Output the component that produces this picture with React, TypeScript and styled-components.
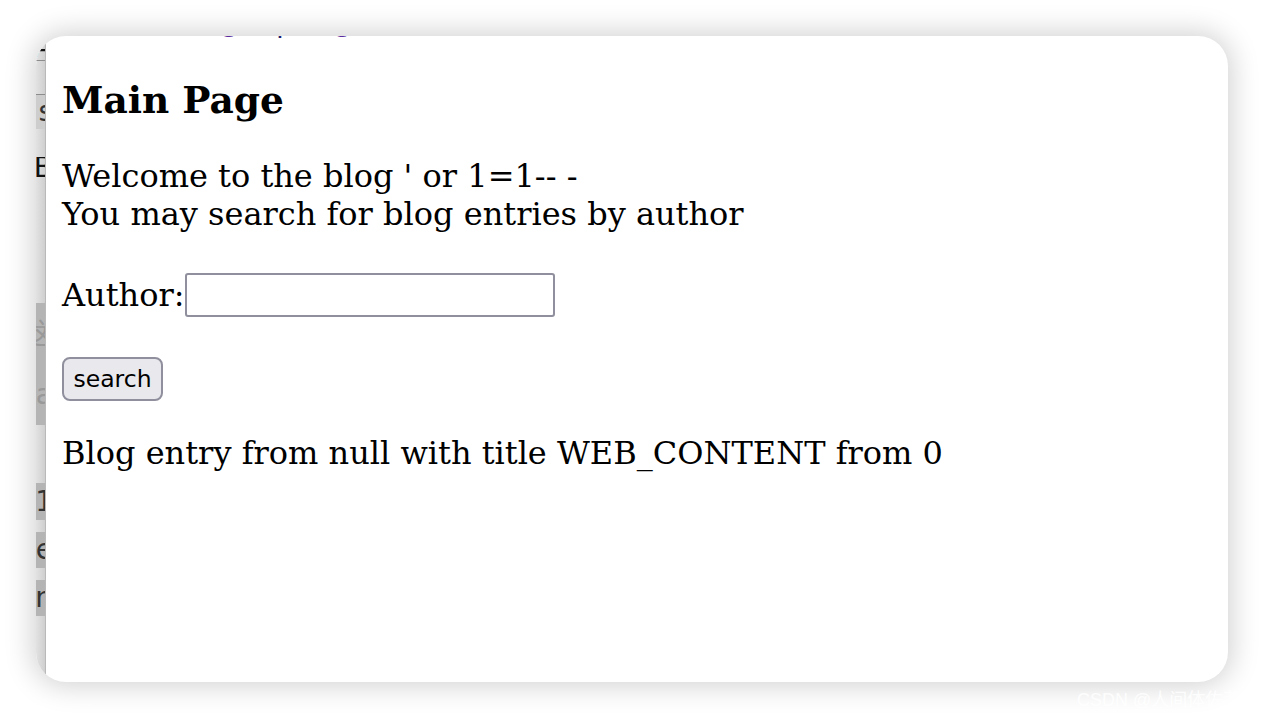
import styled, { createGlobalStyle } from "styled-components"

const GlobalStyle = createGlobalStyle`
    html, body {
        margin: 0;
        padding: 0;
        background: #ffffff;
    }
`

interface StripBlock {
    height: number
    tone: "light" | "mid" | "dark"
    text?: string
    color?: string
    line?: boolean
}

// sliver of the page behind the popup, on the left edge
const stripBlocks: StripBlock[] = [
    { height: 24, tone: "light", text: "A", color: "#111" },
    { height: 33, tone: "light", line: true },
    { height: 34, tone: "mid", text: "s", color: "#333", line: true },
    { height: 28, tone: "light" },
    { height: 22, tone: "light", text: "B", color: "#111" },
    { height: 124, tone: "light" },
    { height: 62, tone: "dark", text: "这", color: "#999" },
    { height: 60, tone: "dark", text: "a", color: "#999" },
    { height: 58, tone: "light" },
    { height: 37, tone: "dark", text: "1", color: "#333" },
    { height: 12, tone: "light" },
    { height: 36, tone: "dark", text: "e", color: "#333" },
    { height: 12, tone: "light" },
    { height: 36, tone: "dark", text: "n", color: "#333" },
]

export default function App() {
    return (
        <>
            <GlobalStyle />
            <Page>
                <Card>
                    <SideStrip>
                        {stripBlocks.map((block, i) => (
                            <StripCell key={i} $height={block.height} $tone={block.tone} $line={block.line}>
                                {block.text && <StripText style={{ color: block.color }}>{block.text}</StripText>}
                            </StripCell>
                        ))}
                    </SideStrip>
                    <Content>
                        <LinkRow>
                            <LinkWord $left={158}>g</LinkWord>
                            <PipeWord $left={34}>|</PipeWord>
                            <LinkWord $left={48}>g</LinkWord>
                        </LinkRow>
                        <Title>Main Page</Title>
                        <Intro>
                            Welcome to the blog ' or 1=1-- -
                            <br />
                            You may search for blog entries by author
                        </Intro>
                        <AuthorForm onSubmit={(e) => e.preventDefault()}>
                            <AuthorRow>
                                <label htmlFor="author">Author:</label>
                                <AuthorInput id="author" type="text" />
                            </AuthorRow>
                            <SearchButton type="submit">search</SearchButton>
                        </AuthorForm>
                        <Result>Blog entry from null with title WEB_CONTENT from 0</Result>
                    </Content>
                </Card>
                <Watermark>CSDN @人间体佐菲</Watermark>
            </Page>
        </>
    )
}

const Page = styled.div`
    position: relative;
    width: 1264px;
    height: 718px;
    box-sizing: border-box;
    padding: 36px;
    background: #ffffff;
`

const Card = styled.div`
    width: 1192px;
    height: 646px;
    display: flex;
    border-radius: 30px;
    overflow: hidden;
    background: #ffffff;
    box-shadow: 0 0 28px 4px rgba(0, 0, 0, 0.18);
`

const SideStrip = styled.div`
    width: 9px;
    flex-shrink: 0;
    display: flex;
    flex-direction: column;
    background: linear-gradient(to right, #e2e2e2, #cfcfcf);
    border-right: 1px solid #b9b9b9;
`

const StripCell = styled.div<{ $height: number; $tone: string; $line?: boolean }>`
    height: ${(p) => p.$height}px;
    flex-shrink: 0;
    display: flex;
    align-items: center;
    justify-content: flex-end;
    overflow: hidden;
    background: ${(p) => (p.$tone === "dark" ? "#b4b4b4" : p.$tone === "mid" ? "#cdcdcd" : "transparent")};
    border-top: ${(p) => (p.$line ? "1px solid #8c8c8c" : "0")};
`

const StripText = styled.span`
    font-family: "DejaVu Sans", sans-serif;
    font-size: 28px;
    line-height: 1;
    white-space: nowrap;
    margin-right: -8px;
`

const Content = styled.div`
    flex: 1;
    padding: 0 16px;
    font-family: "DejaVu Serif", serif;
    font-size: 32px;
    color: #000;
`

// links of the page above, only the bottom of their descenders reach into view
const LinkRow = styled.div`
    height: 0;
    display: flex;
    font-size: 32px;
    line-height: 32px;
    transform: translateY(-33px);
`

const LinkWord = styled.span<{ $left: number }>`
    margin-left: ${(p) => p.$left}px;
    color: #5b2ca0;
`

const PipeWord = styled.span<{ $left: number }>`
    margin-left: ${(p) => p.$left}px;
    color: #1a1a6e;
`

const Title = styled.h2`
    margin: 42px 0 0;
    font-size: 37.5px;
    font-weight: bold;
    line-height: 44px;
`

const Intro = styled.p`
    margin: 35px 0 0;
    line-height: 38px;
`

const AuthorForm = styled.form`
    margin: 40px 0 0;
    display: flex;
    flex-direction: column;
    align-items: flex-start;
    gap: 40px;
`

const AuthorRow = styled.div`
    display: flex;
    align-items: center;
    height: 44px;
    line-height: 38px;
`

const AuthorInput = styled.input`
    width: 370px;
    height: 44px;
    box-sizing: border-box;
    margin: 0;
    border: 2px solid #8f8f9d;
    border-radius: 3px;
    background: #ffffff;
    font-size: 26px;
`

const SearchButton = styled.button`
    width: 101px;
    height: 44px;
    box-sizing: border-box;
    padding: 0;
    border: 2px solid #8f8f9d;
    border-radius: 8px;
    background: #e9e9ed;
    font-family: "DejaVu Sans", sans-serif;
    font-size: 23.5px;
    color: #000;
`

const Result = styled.p`
    margin: 33px 0 0;
    line-height: 38px;
`

const Watermark = styled.div`
    position: absolute;
    left: 1077px;
    top: 685px;
    font-family: "Liberation Sans", "Noto Sans CJK SC", sans-serif;
    font-size: 18px;
    color: rgba(255, 255, 255, 0.85);
    white-space: nowrap;
`
